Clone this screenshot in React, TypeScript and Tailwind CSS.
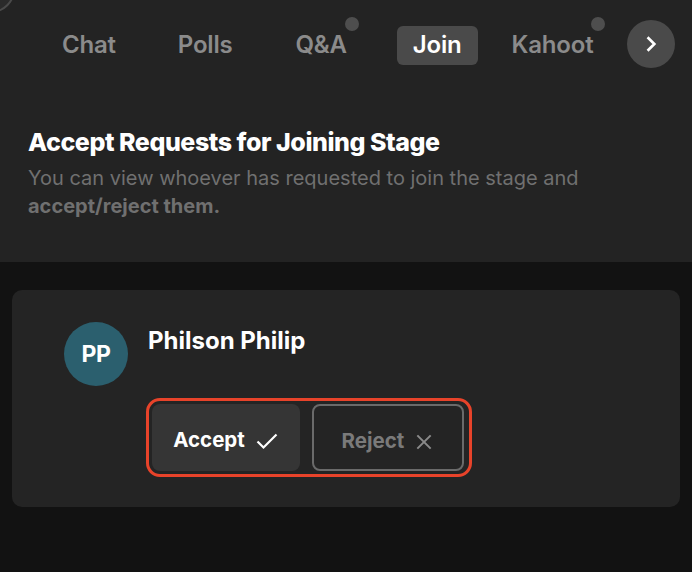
import React from 'react';

const font = { fontFamily: 'Inter, "Noto Sans", sans-serif' };

function Tab({ label, active, dot, className }: { label: string; active?: boolean; dot?: boolean; className?: string }) {
  return (
    <div className={`relative ${className ?? ''}`}>
      <div
        className={`h-[39px] px-[17px] flex items-center rounded-[6px] text-[24px] font-semibold tracking-[-0.2px] ${
          active ? 'bg-[#4a4a4a] text-white !px-[16px]' : 'text-[#8b8b8b]'
        }`}>
        {label}
      </div>
      {dot && <span className="absolute -top-[9px] right-[5px] w-[14px] h-[14px] rounded-full bg-[#4e4e4e]" />}
    </div>
  );
}

export default function App() {
  return (
    <div className="w-[692px] h-[572px] bg-[#121212] overflow-hidden flex flex-col" style={font}>
      {/* header + tabs */}
      <div className="relative bg-[#232323] h-[262px] flex flex-col">
        <span className="absolute -left-[33px] -top-[35px] w-[48px] h-[48px] rounded-full border-2 border-[#4a4a4a] bg-[#2a2a2a]" />

        <div className="flex items-center pl-[45px] pt-[22px]">
          <Tab label="Chat" />
          <Tab label="Polls" className="ml-[28px]" />
          <Tab label="Q&A" dot className="ml-[29px]" />
          <Tab label="Join" active className="ml-[33px]" />
          <Tab label="Kahoot" dot className="ml-[17px]" />
          <button className="ml-[17px] -mt-[2px] w-[48px] h-[48px] rounded-full bg-[#4a4a4a] flex items-center justify-center">
            <svg width="20" height="20" viewBox="0 0 24 24" fill="none" stroke="white" strokeWidth="3.2" strokeLinecap="square">
              <path d="M9 5l7 7-7 7" />
            </svg>
          </button>
        </div>

        <div className="px-[28px] pt-[58px]">
          <h1 className="text-[25px] font-extrabold text-white tracking-[-0.45px] leading-[32px]">
            Accept Requests for Joining Stage
          </h1>
          <p className="mt-[6px] text-[20px] leading-[28px] text-[#707070]">
            You can view whoever has requested to join the stage and
            <br />
            <span className="font-bold">accept/reject them.</span>
          </p>
        </div>
      </div>

      {/* request card */}
      <div className="px-[12px] pt-[28px]">
        <div className="bg-[#242424] rounded-[10px] h-[217px] pl-[52px] pt-[32px]">
          <div className="flex items-start">
            <div className="w-[64px] h-[64px] rounded-full bg-[#2b5f6e] flex items-center justify-center text-white text-[23px] font-bold tracking-[-0.3px]">
              PP
            </div>
            <div className="ml-[20px] mt-[1px] text-white text-[24px] font-bold">
              Philson Philip
            </div>
          </div>

          <div className="ml-[82px] mt-[12px] w-[326px] h-[79px] border-[3px] border-[#e8432a] rounded-[14px] flex items-center px-[3px] gap-[12px]">
            <button className="w-[148px] h-[67px] bg-[#353535] rounded-[8px] flex items-center justify-center gap-[10px] text-white text-[20.5px] font-bold pt-[6px]">
              Accept
              <svg width="24" height="24" viewBox="0 0 24 24" fill="none" stroke="white" strokeWidth="2.2">
                <path d="M2.5 12.5l6 6L21.5 5.5" />
              </svg>
            </button>
            <button className="w-[152px] h-[67px] border-2 border-[#6a6a6a] rounded-[8px] flex items-center justify-center gap-[10px] text-[#7a7a7a] text-[20.5px] font-bold pt-[8px]">
              Reject
              <svg width="20" height="20" viewBox="0 0 24 24" fill="none" stroke="#8a8a8a" strokeWidth="2.4">
                <path d="M4 4l16 16M20 4L4 20" />
              </svg>
            </button>
          </div>
        </div>
      </div>
    </div>
  );
}
